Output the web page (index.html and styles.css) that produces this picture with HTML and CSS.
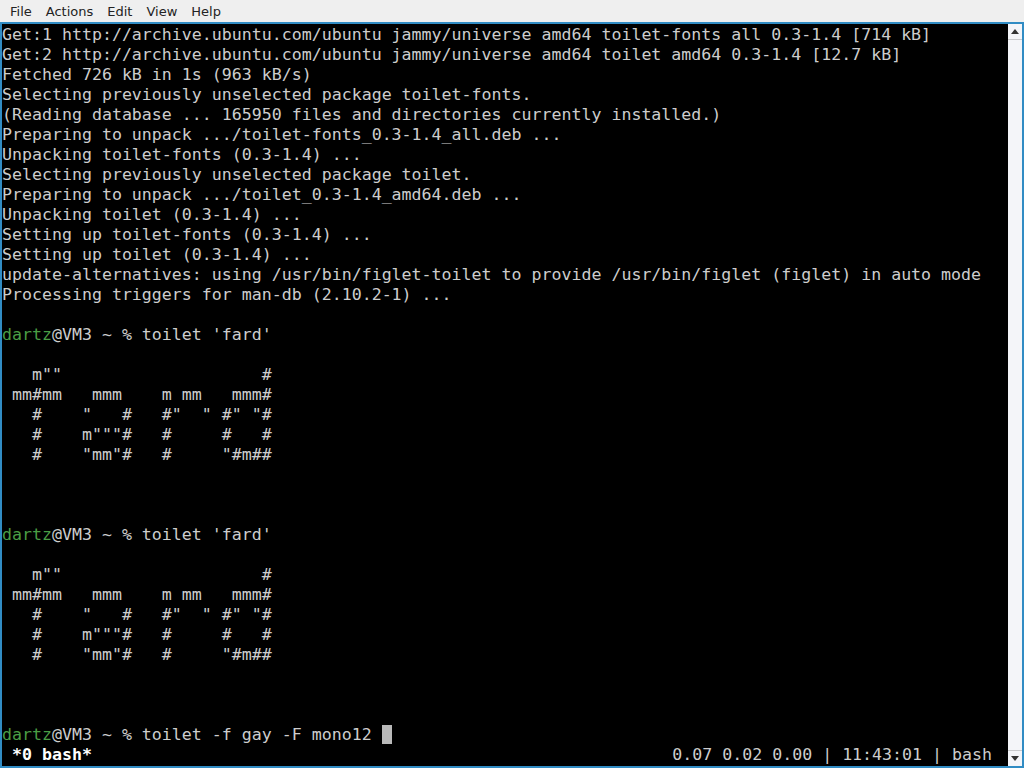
FILE: index.html
```html
<!DOCTYPE html>
<html lang="en">
<head>
    <meta charset="UTF-8">
    <meta name="viewport" content="width=device-width, initial-scale=1.0">
    <title>QTerminal</title>
    <link rel="stylesheet" href="styles.css">
</head>
<body>
    <div class="window">
        <div class="menu-bar">
            <span class="menu-item">File</span>
            <span class="menu-item">Actions</span>
            <span class="menu-item">Edit</span>
            <span class="menu-item">View</span>
            <span class="menu-item">Help</span>
        </div>

        <div class="frame">
            <div class="screen">
<pre class="output">Get:1 http://archive.ubuntu.com/ubuntu jammy/universe amd64 toilet-fonts all 0.3-1.4 [714 kB]
Get:2 http://archive.ubuntu.com/ubuntu jammy/universe amd64 toilet amd64 0.3-1.4 [12.7 kB]
Fetched 726 kB in 1s (963 kB/s)
Selecting previously unselected package toilet-fonts.
(Reading database ... 165950 files and directories currently installed.)
Preparing to unpack .../toilet-fonts_0.3-1.4_all.deb ...
Unpacking toilet-fonts (0.3-1.4) ...
Selecting previously unselected package toilet.
Preparing to unpack .../toilet_0.3-1.4_amd64.deb ...
Unpacking toilet (0.3-1.4) ...
Setting up toilet-fonts (0.3-1.4) ...
Setting up toilet (0.3-1.4) ...
update-alternatives: using /usr/bin/figlet-toilet to provide /usr/bin/figlet (figlet) in auto mode
Processing triggers for man-db (2.10.2-1) ...

<span class="user">dartz</span>@VM3 ~ % toilet 'fard'

   m""                    #
 mm#mm   mmm    m mm   mmm#
   #    "   #   #"  " #" "#
   #    m"""#   #     #   #
   #    "mm"#   #     "#m##



<span class="user">dartz</span>@VM3 ~ % toilet 'fard'

   m""                    #
 mm#mm   mmm    m mm   mmm#
   #    "   #   #"  " #" "#
   #    m"""#   #     #   #
   #    "mm"#   #     "#m##



<span class="user">dartz</span>@VM3 ~ % toilet -f gay -F mono12 <span class="cursor"> </span></pre>
                <div class="status">
                    <span class="session"> *0 bash*</span>
                    <span class="load">0.07 0.02 0.00 | 11:43:01 | bash</span>
                </div>
            </div>

            <div class="scrollbar">
                <div class="arrow up">
                    <svg width="8" height="5" viewBox="0 0 8 5"><polygon points="0,5 8,5 4,0" fill="#333"/></svg>
                </div>
                <div class="track"></div>
                <div class="arrow down">
                    <svg width="8" height="5" viewBox="0 0 8 5"><polygon points="0,0 8,0 4,5" fill="#333"/></svg>
                </div>
            </div>
        </div>
    </div>
</body>
</html>
```

FILE: styles.css
```css
body {
    margin: 0;
    background-color: #efefef;
    font-family: "DejaVu Sans", sans-serif;
}
.window {
    display: flex;
    flex-direction: column;
    height: 100vh;
}
.menu-bar {
    height: 22px;
    display: flex;
    align-items: center;
    padding-left: 3px;
    background: #efefef;
    font-size: 13px;
    color: #232323;
}
.menu-item {
    padding: 0 7px;
}
.frame {
    flex: 1;
    display: flex;
    border: 2px solid #318cc4;
    min-height: 0;
}
.screen {
    flex: 1;
    padding-top: 1px;
    background: #000;
    color: #cdcdcd;
    font-family: "DejaVu Sans Mono", monospace;
    font-size: 16.6px;
    line-height: 20px;
}
.output {
    margin: 0;
    font: inherit;
    white-space: pre;
}
.user {
    color: #4a9d45;
}
.cursor {
    background: #b9b9b9;
}
.status {
    display: flex;
    justify-content: space-between;
    white-space: pre;
    padding-right: 16px;
}
.session {
    color: #fff;
    font-weight: bold;
}
.load {
    color: #cdcdcd;
}
.scrollbar {
    width: 14px;
    display: flex;
    flex-direction: column;
    background: #f4f5f9;
}
.arrow {
    height: 15px;
    display: flex;
    align-items: center;
    justify-content: center;
}
.arrow.up {
    border-bottom: 1px solid #c9cacd;
}
.arrow.down {
    border-top: 1px solid #c9cacd;
}
.track {
    flex: 1;
}
```
